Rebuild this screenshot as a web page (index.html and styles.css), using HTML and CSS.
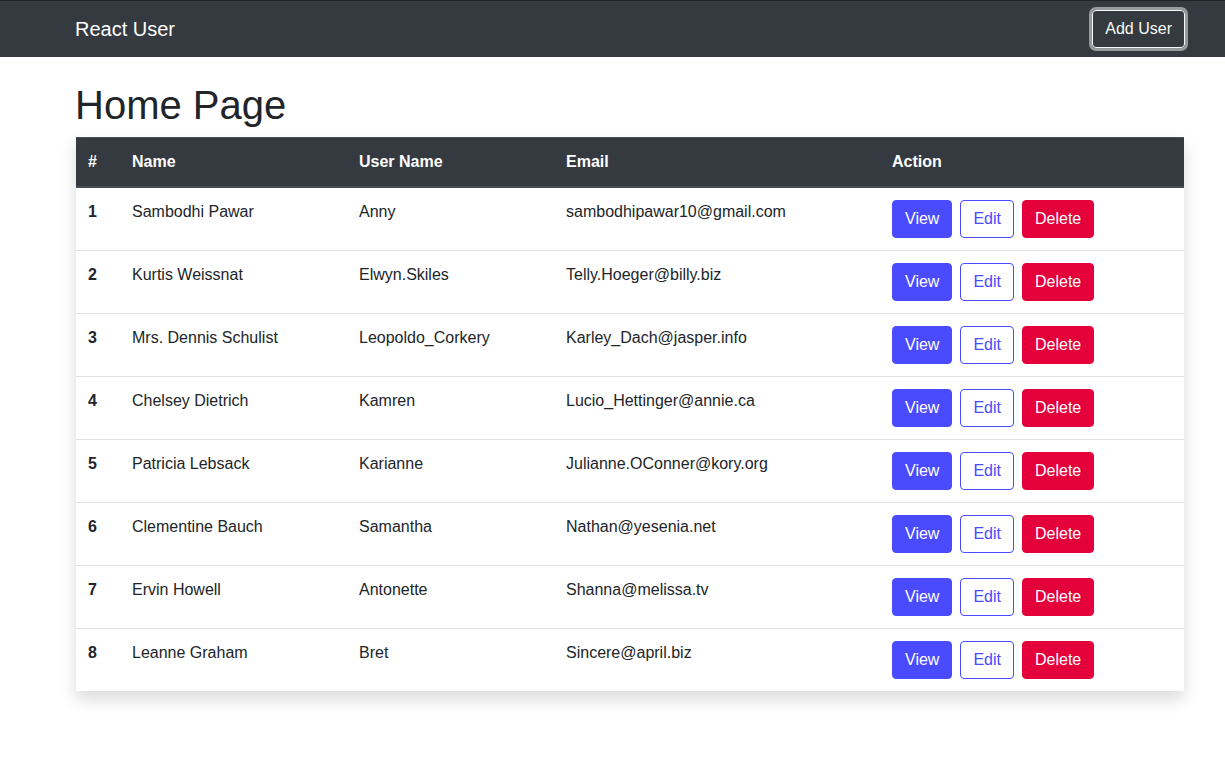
FILE: index.html
```html
<!DOCTYPE html>
<html>
<head>
<meta charset="utf-8">
<link rel="stylesheet" href="styles.css">
</head>
<body>
<nav class="navbar">
  <div class="nav-inner">
    <span class="brand">React User</span>
    <button class="btn btn-add">Add User</button>
  </div>
</nav>
<main class="container">
  <h1 class="title">Home Page</h1>
  <div class="table-card">
  <table class="users">
    <thead>
      <tr>
        <th class="c-num">#</th>
        <th class="c-name">Name</th>
        <th class="c-user">User Name</th>
        <th class="c-email">Email</th>
        <th class="c-action">Action</th>
      </tr>
    </thead>
    <tbody>
      <tr><th>1</th><td>Sambodhi Pawar</td><td>Anny</td><td>sambodhipawar10@gmail.com</td><td><div class="actions"><button class="btn btn-view">View</button><button class="btn btn-edit">Edit</button><button class="btn btn-delete">Delete</button></div></td></tr>
      <tr><th>2</th><td>Kurtis Weissnat</td><td>Elwyn.Skiles</td><td>Telly.Hoeger@billy.biz</td><td><div class="actions"><button class="btn btn-view">View</button><button class="btn btn-edit">Edit</button><button class="btn btn-delete">Delete</button></div></td></tr>
      <tr><th>3</th><td>Mrs. Dennis Schulist</td><td>Leopoldo_Corkery</td><td>Karley_Dach@jasper.info</td><td><div class="actions"><button class="btn btn-view">View</button><button class="btn btn-edit">Edit</button><button class="btn btn-delete">Delete</button></div></td></tr>
      <tr><th>4</th><td>Chelsey Dietrich</td><td>Kamren</td><td>Lucio_Hettinger@annie.ca</td><td><div class="actions"><button class="btn btn-view">View</button><button class="btn btn-edit">Edit</button><button class="btn btn-delete">Delete</button></div></td></tr>
      <tr><th>5</th><td>Patricia Lebsack</td><td>Karianne</td><td>Julianne.OConner@kory.org</td><td><div class="actions"><button class="btn btn-view">View</button><button class="btn btn-edit">Edit</button><button class="btn btn-delete">Delete</button></div></td></tr>
      <tr><th>6</th><td>Clementine Bauch</td><td>Samantha</td><td>Nathan@yesenia.net</td><td><div class="actions"><button class="btn btn-view">View</button><button class="btn btn-edit">Edit</button><button class="btn btn-delete">Delete</button></div></td></tr>
      <tr><th>7</th><td>Ervin Howell</td><td>Antonette</td><td>Shanna@melissa.tv</td><td><div class="actions"><button class="btn btn-view">View</button><button class="btn btn-edit">Edit</button><button class="btn btn-delete">Delete</button></div></td></tr>
      <tr><th>8</th><td>Leanne Graham</td><td>Bret</td><td>Sincere@april.biz</td><td><div class="actions"><button class="btn btn-view">View</button><button class="btn btn-edit">Edit</button><button class="btn btn-delete">Delete</button></div></td></tr>
    </tbody>
  </table>
  </div>
</main>
</body>
</html>
```
FILE: styles.css
```css
* { box-sizing: border-box; }
html, body { margin: 0; padding: 0; }
html, body { min-height: 100%; }
body {
  font-family: "Liberation Sans", Arial, sans-serif;
  font-size: 16px;
  line-height: 1.5;
  color: #212529;
  background: #fff;
}
.navbar {
  background: #343a40;
  border-top: 1px solid #1f2226;
  padding: 8px 0;
}
.nav-inner {
  width: 1111px;
  margin-left: 75px;
  display: flex;
  align-items: center;
  justify-content: space-between;
}
.brand {
  color: #fff;
  font-size: 20px;
  line-height: 30px;
  padding: 5px 0;
}
.btn {
  font-family: inherit;
  font-size: 16px;
  line-height: 24px;
  padding: 6px 12px;
  border: 1px solid transparent;
  border-radius: 4px;
  background: transparent;
  cursor: pointer;
}
.btn-add {
  color: #f8f9fa;
  border-color: #f8f9fa;
  box-shadow: 0 0 0 3px rgba(248, 249, 250, 0.5);
  margin-right: 1px;
}
.container {
  width: 1110px;
  margin-left: 75px;
  padding-top: 24px;
  padding-bottom: 60px;
}
.title {
  font-size: 40px;
  font-weight: 400;
  line-height: 48px;
  margin: 0 0 8px;
}
.table-card {
  width: 1108px;
  margin-left: 1px;
  background: #fff;
  box-shadow: 0 8px 16px rgba(0, 0, 0, 0.15);
}
.users {
  width: 100%;
  border-collapse: collapse;
}
.users th, .users td {
  padding: 12px;
  text-align: left;
  vertical-align: top;
  border-top: 1px solid #dee2e6;
}
.users thead th {
  background: #343a40;
  color: #fff;
  font-weight: 700;
  border-top: 1px solid #454d55;
  border-bottom: 2px solid #454d55;
  vertical-align: bottom;
}
.users tbody th { font-weight: 700; }
.c-num { width: 44px; }
.c-name { width: 227px; }
.c-user { width: 207px; }
.c-email { width: 326px; }
.c-action { width: 304px; }
.actions {
  display: flex;
  gap: 8px;
}
.btn-view {
  background: #4a4aff;
  border-color: #4a4aff;
  color: #fff;
}
.btn-edit {
  background: #fff;
  border-color: #4a4aff;
  color: #4a4aff;
}
.btn-delete {
  background: #e4003b;
  border-color: #e4003b;
  color: #fff;
}
```
